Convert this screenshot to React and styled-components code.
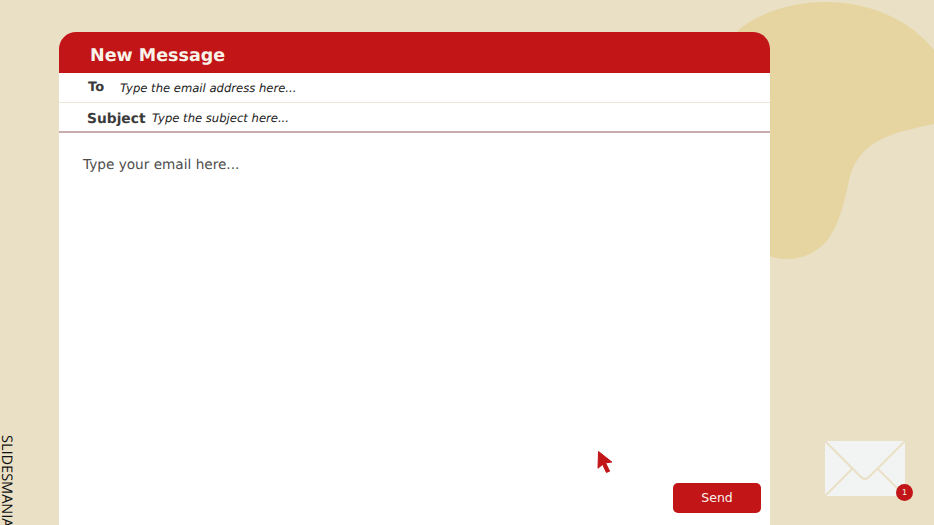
import React from "react";
import styled, { createGlobalStyle } from "styled-components";

const Global = createGlobalStyle`
  html, body {
    margin: 0;
    padding: 0;
    height: 100%;
    overflow: hidden;
    text-rendering: geometricPrecision;
  }
  #root {
    height: 100%;
  }
`;

const Slide = styled.div`
  position: relative;
  display: flex;
  width: 934px;
  height: 525px;
  overflow: hidden;
  background: #e9e0c5;
  font-family: "DejaVu Sans", sans-serif;
`;

const Blob = styled.svg`
  position: absolute;
  top: 0;
  right: 0;
  width: 234px;
  height: 270px;
`;

const Rail = styled.div`
  flex: 0 0 59px;
  display: flex;
  justify-content: flex-start;
  padding-top: 435px;
  box-sizing: border-box;
`;

const Brand = styled.div`
  margin-left: -3px;
  writing-mode: vertical-rl;
  font-family: "Open Sans", sans-serif;
  font-size: 14.5px;
  line-height: 18px;
  color: #111;
  white-space: nowrap;
`;

const Card = styled.div`
  position: relative;
  flex: 0 0 711px;
  display: flex;
  flex-direction: column;
  margin-top: 32px;
  background: #fff;
  border-radius: 17px 17px 0 0;
`;

const Header = styled.div`
  height: 41px;
  padding-left: 31px;
  background: #c21518;
  border-radius: 17px 17px 0 0;
  color: #f8f4ea;
  font-size: 17.5px;
  font-weight: 700;
  line-height: 48px;
`;

const Row = styled.div`
  display: flex;
  align-items: center;
  height: 30px;
  padding: ${(p) => p.$top}px 0 0 28px;
  box-sizing: border-box;
  border-bottom: ${(p) => p.$line};
`;

const Label = styled.span`
  width: ${(p) => p.$width}px;
  margin-top: ${(p) => p.$nudge}px;
  padding-left: ${(p) => p.$inset}px;
  box-sizing: border-box;
  color: #3a3a3a;
  font-size: ${(p) => p.$size}px;
  font-weight: 700;
`;

const Hint = styled.span`
  color: #1a1a1a;
  font-size: 11.6px;
  font-style: italic;
`;

const Body = styled.div`
  flex: 1;
  display: flex;
  flex-direction: column;
  align-items: flex-end;
  padding: 24px 9px 12px 24px;
  position: relative;
`;

const Placeholder = styled.div`
  align-self: flex-start;
  margin-bottom: auto;
  color: #4d4d4d;
  font-size: 13.65px;
  line-height: 17px;
`;

const SendButton = styled.button`
  width: 88px;
  height: 30px;
  padding: 0 0 2px;
  border: 0;
  border-radius: 5px;
  background: #c21518;
  color: #f8f4ea;
  font-family: inherit;
  font-size: 12.5px;
`;

const Pointer = styled.svg`
  position: absolute;
  left: 538px;
  top: 317px;
  width: 17px;
  height: 24px;
`;

const Side = styled.div`
  position: relative;
  flex: 1;
  padding: 441px 0 0 55px;
`;

const Mail = styled.div`
  position: relative;
  width: 80px;
  height: 55px;
  background: #f2f3f3;
`;

const MailLines = styled.svg`
  display: block;
  width: 100%;
  height: 100%;
`;

const Badge = styled.div`
  position: absolute;
  right: -8px;
  bottom: -5px;
  width: 17px;
  height: 17px;
  border-radius: 50%;
  background: #c21518;
  color: #f8f4ea;
  font-size: 8px;
  line-height: 17px;
  text-align: center;
`;

export default function App() {
  return (
    <>
      <Global />
      <Slide>
        <Blob viewBox="700 0 234 270">
          <path
            d="M745 25 C770 8 800 2 825 2 C870 2 910 20 934 50 L934 124 C915 128 895 132 880 140 C862 149 853 163 849 180 C845 200 840 222 829 238 C817 253 803 259 787 259 C760 259 735 240 725 200 L700 100 C710 60 725 40 745 25 Z"
            fill="#e6d5a0"
          />
        </Blob>
        <Rail>
          <Brand>SLIDESMANIA</Brand>
        </Rail>
        <Card>
          <Header>New Message</Header>
          <Row $top={0} $line="1px solid #ece6d4">
            <Label $width={33} $nudge={0} $inset={1} $size={13}>To</Label>
            <Hint>Type the email address here...</Hint>
          </Row>
          <Row $top={2} $line="2px solid #c9acac">
            <Label $width={65} $nudge={2} $inset={0} $size={13.8}>Subject</Label>
            <Hint>Type the subject here...</Hint>
          </Row>
          <Body>
            <Placeholder>Type your email here...</Placeholder>
            <SendButton>Send</SendButton>
            <Pointer viewBox="0 0 17 24">
              <path
                d="M1.5 1.5 L14.8 12 L8.6 12.9 L12.6 21.2 L9.4 22.4 L5.6 14.4 L1 18.2 Z"
                fill="#c21518"
                stroke="#c21518"
                strokeWidth="1"
                strokeLinejoin="round"
              />
            </Pointer>
          </Body>
        </Card>
        <Side>
          <Mail>
            <MailLines viewBox="0 0 80 55">
              <path
                d="M0 0 L36 36 Q40 40 44 36 L80 0 M28 27 L0 55 M52 27 L80 55"
                fill="none"
                stroke="#e9e0c5"
                strokeWidth="2"
              />
            </MailLines>
            <Badge>1</Badge>
          </Mail>
        </Side>
      </Slide>
    </>
  );
}
